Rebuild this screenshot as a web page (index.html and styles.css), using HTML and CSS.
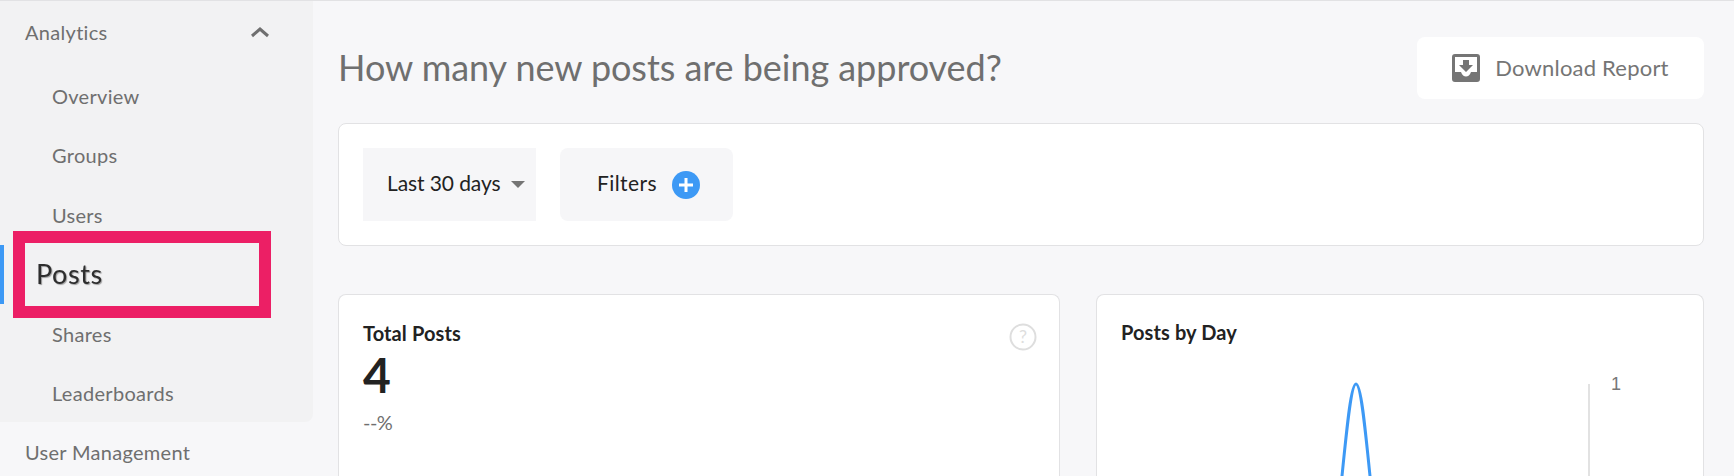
FILE: index.html
```html
<!DOCTYPE html>
<html lang="en">
<head>
  <title>Analytics — Posts</title>
  <meta charset="utf-8">
  <link rel="stylesheet" href="styles.css">
</head>
<body>
  <div class="page">
    <aside class="sidebar">
      <div class="nav-group">
        <div class="nav-head">
          <span>Analytics</span>
          <svg class="nav-chevron" width="20" height="12" viewBox="0 0 20 12" aria-hidden="true">
            <path d="M2 10 L10 3 L18 10" fill="none" stroke="#6f6f6f" stroke-width="3"></path>
          </svg>
        </div>
        <a href="#" class="nav-link">Overview</a>
        <a href="#" class="nav-link">Groups</a>
        <a href="#" class="nav-link">Users</a>
        <a href="#" class="nav-link nav-link--active">
          <!-- annotation drawn on top of the screenshot -->
          <span class="callout"><span class="callout__text">Posts</span></span>
        </a>
        <a href="#" class="nav-link">Shares</a>
        <a href="#" class="nav-link">Leaderboards</a>
      </div>
      <div class="nav-head">User Management</div>
    </aside>

    <main class="main">
      <header class="main-head">
        <h1>How many new posts are being approved?</h1>
        <button class="download-btn">
          <svg width="28" height="28" viewBox="0 0 28 28" aria-hidden="true">
            <path fill="#757575" fill-rule="evenodd" d="M3 0h22a3 3 0 0 1 3 3v22a3 3 0 0 1-3 3H3a3 3 0 0 1-3-3V3a3 3 0 0 1 3-3Zm0 3v15h6c1 3 3 4.500 5 4.500s4-1.500 5-4.500h6V3H3Z"></path>
            <path fill="#757575" d="M11 6h6v5h4l-7 7-7-7h4Z"></path>
          </svg>
          <span>Download Report</span>
        </button>
      </header>

      <section class="card filter-bar">
        <div class="filter filter--select">
          <span>Last 30 days</span>
          <span class="caret"></span>
        </div>
        <div class="filter filter--add">
          <span>Filters</span>
          <svg width="28" height="28" viewBox="0 0 28 28" aria-hidden="true">
            <circle cx="14" cy="14" r="14" fill="#3d99f5"></circle>
            <path d="M14 7v14M7 14h14" stroke="#fff" stroke-width="3"></path>
          </svg>
        </div>
      </section>

      <div class="stats">
        <section class="card stat">
          <div class="stat__head">
            <h2>Total Posts</h2>
            <svg class="help" width="28" height="28" viewBox="0 0 28 28" aria-hidden="true">
              <circle cx="14" cy="14" r="12.500" fill="none" stroke="#dedede" stroke-width="2"></circle>
              <text x="14" y="20" text-anchor="middle" class="help-mark">?</text>
            </svg>
          </div>
          <div class="stat__value">4</div>
          <div class="stat__delta">--%</div>
        </section>

        <section class="card stat">
          <h2>Posts by Day</h2>
          <svg class="chart" width="606" height="115" viewBox="0 0 606 115" aria-hidden="true">
            <path d="M244.500 115 C250 60 254 18 259 18 C264 18 268 60 273.500 115" fill="none" stroke="#3d99f5" stroke-width="3"></path>
            <line x1="492" y1="18" x2="492" y2="115" stroke="#e2e2e2" stroke-width="2"></line>
            <text x="514" y="24" class="chart__tick">1</text>
          </svg>
        </section>
      </div>
    </main>
  </div>
</body>
</html>
```

FILE: styles.css
```css
*, *::before, *::after {
  margin: 0;
  padding: 0;
  box-sizing: border-box;
}

html, body {
  height: 476px;
  overflow: hidden;
}

body {
  background-color: #f7f7f9;
  border-top: 1px solid #e2e2e4;
  font-family: "Lato", sans-serif;
  color: #6f6f6f;
}

.page {
  display: flex;
  height: 475px;
  overflow: hidden;
}

.sidebar {
  flex: 0 0 313px;
}

.nav-group {
  height: 421px;
  padding-top: 1px;
  background-color: #f2f2f3;
  border-bottom-right-radius: 8px;
}

.nav-head {
  display: flex;
  align-items: center;
  justify-content: space-between;
  height: 60px;
  margin-bottom: 4px;
  padding: 0 43px 0 25px;
  font-size: 20px;
  letter-spacing: 0.3px;
}

.nav-group + .nav-head {
  height: 59px;
}

.nav-link {
  display: flex;
  align-items: center;
  height: 59.500px;
  padding-left: 52px;
  font-size: 20px;
  letter-spacing: 0.3px;
  color: inherit;
  text-decoration: none;
}

.nav-link--active {
  position: relative;
  border-left: 4px solid #3d99f5;
  padding-left: 48px;
}

.callout {
  position: absolute;
  top: -14px;
  left: 9px;
  display: flex;
  align-items: center;
  width: 258px;
  height: 87px;
  padding: 0 0 2px 11px;
  border: 12px solid #ec1f65;
  background-color: #f2f2f3;
}

.callout__text {
  font-size: 27px;
  letter-spacing: 0.6px;
  color: #2e2e2e;
  text-shadow: 1px 1px 1px rgba(0, 0, 0, 0.35);
  filter: blur(0.6px);
}

.main {
  flex: 1;
  padding: 36px 30px 0 25px;
}

.main-head {
  display: flex;
  align-items: center;
  justify-content: space-between;
  margin-bottom: 24px;
}

h1 {
  margin-top: -2px;
  font-size: 36px;
  font-weight: 400;
  letter-spacing: -0.05px;
  color: #6f6f6f;
}

.download-btn {
  display: flex;
  align-items: center;
  justify-content: center;
  gap: 15px;
  width: 287px;
  height: 62px;
  border: none;
  border-radius: 8px;
  background-color: #fff;
  font-family: inherit;
  font-size: 22px;
  letter-spacing: 0.2px;
  color: #757575;
}

.download-btn span {
  margin-top: -2px;
}

.card {
  border: 1px solid #e2e2e4;
  border-radius: 8px;
  background-color: #fff;
}

.filter-bar {
  display: flex;
  gap: 24px;
  height: 123px;
  padding: 24px;
}

.filter {
  display: flex;
  align-items: center;
  width: 173px;
  height: 73px;
  background-color: #f6f6f8;
  font-size: 21px;
  color: #222;
}

.filter span:first-child {
  margin-top: -4px;
}

.filter--select {
  gap: 11px;
  padding-left: 24px;
  letter-spacing: -0.1px;
}

.filter--add {
  justify-content: center;
  gap: 15px;
  padding-left: 4px;
  border-radius: 8px;
  letter-spacing: 0.4px;
}

.caret {
  border-top: 7px solid #757575;
  border-left: 7px solid transparent;
  border-right: 7px solid transparent;
}

.stats {
  display: grid;
  grid-template-columns: 722px 608px;
  gap: 36px;
  margin-top: 48px;
}

.stat {
  height: 182px;
  padding: 25px 22px 0 24px;
  border-bottom: none;
  border-bottom-left-radius: 0;
  border-bottom-right-radius: 0;
}

.stat__head {
  display: flex;
  justify-content: space-between;
  margin-top: 1px;
}

.help {
  margin-top: 2px;
}

h2 {
  font-size: 20px;
  font-weight: 700;
  letter-spacing: 0.1px;
  color: #222;
}

.help-mark {
  font-size: 18px;
  fill: #dedede;
}

.stat__value {
  margin-top: -5px;
  font-size: 48px;
  font-weight: 700;
  line-height: 58px;
  color: #222;
}

.stat__delta {
  margin-top: 6px;
  font-size: 20px;
  letter-spacing: -0.5px;
}

.chart {
  display: block;
  margin: 22px 0 0 -24px;
}

.chart__tick {
  font-family: "Liberation Sans", sans-serif;
  font-size: 18px;
  fill: #777;
}
```
